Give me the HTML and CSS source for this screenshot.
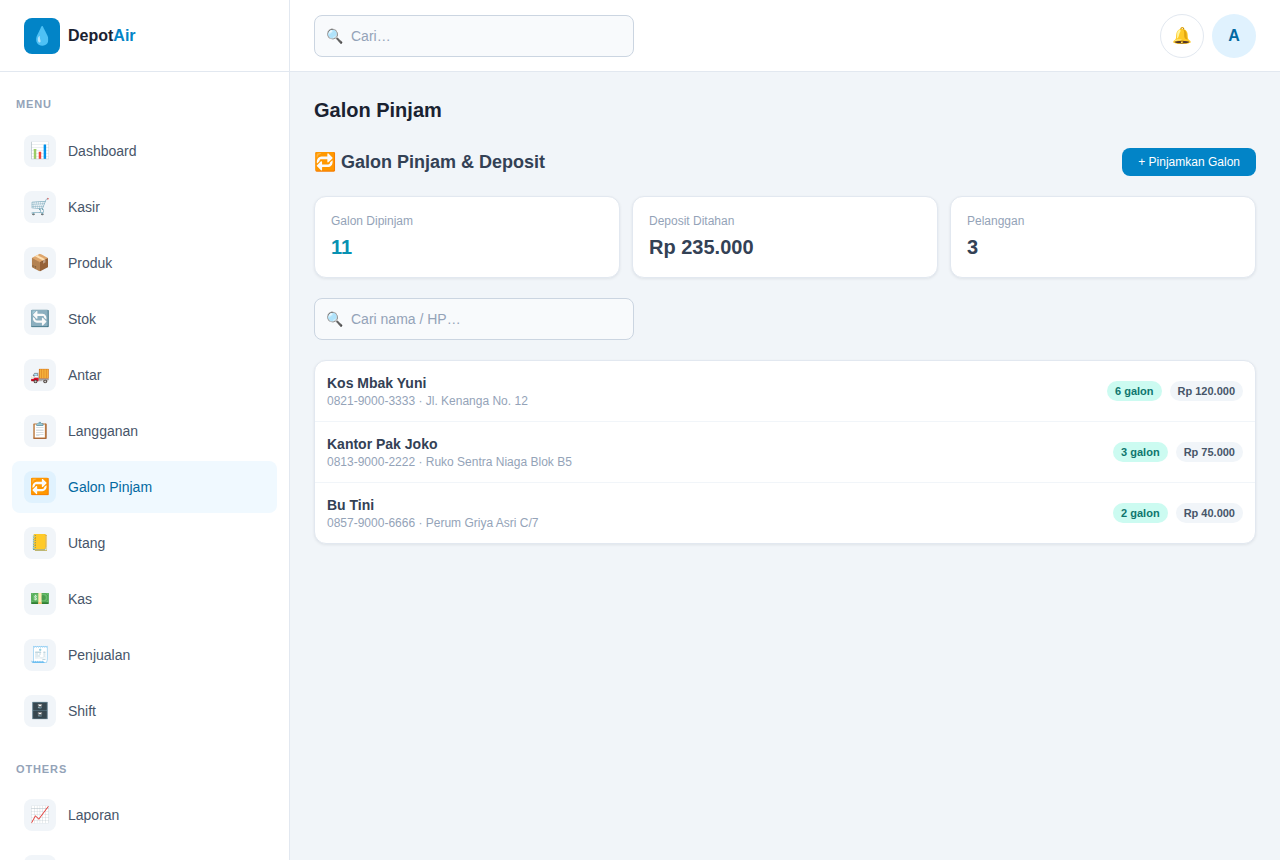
FILE: index.html
```html
<!DOCTYPE html>
<html lang="id">
<head>
<meta charset="utf-8">
<meta name="viewport" content="width=device-width, initial-scale=1">
<title>Galon Pinjam – DepotAir</title>
<link rel="stylesheet" href="styles.css">
</head>
<body>
<div class="app">
  <aside class="sidebar">
    <a class="brand" href="#"><span class="brand-logo" aria-hidden="true">💧</span><span>Depot<span class="brand-accent">Air</span></span></a>
    <nav class="nav">
      <section class="nav-section">
        <h2 class="nav-label">MENU</h2>
        <ul class="nav-list">
          <li><a class="nav-item" href="#"><span class="nav-icon">📊</span>Dashboard</a></li>
          <li><a class="nav-item" href="#"><span class="nav-icon">🛒</span>Kasir</a></li>
          <li><a class="nav-item" href="#"><span class="nav-icon">📦</span>Produk</a></li>
          <li><a class="nav-item" href="#"><span class="nav-icon">🔄</span>Stok</a></li>
          <li><a class="nav-item" href="#"><span class="nav-icon">🚚</span>Antar</a></li>
          <li><a class="nav-item" href="#"><span class="nav-icon">📋</span>Langganan</a></li>
          <li><a class="nav-item active" href="#" aria-current="page"><span class="nav-icon">🔁</span>Galon Pinjam</a></li>
          <li><a class="nav-item" href="#"><span class="nav-icon">📒</span>Utang</a></li>
          <li><a class="nav-item" href="#"><span class="nav-icon">💵</span>Kas</a></li>
          <li><a class="nav-item" href="#"><span class="nav-icon">🧾</span>Penjualan</a></li>
          <li><a class="nav-item" href="#"><span class="nav-icon">🗄️</span>Shift</a></li>
        </ul>
      </section>
      <section class="nav-section">
        <h2 class="nav-label">OTHERS</h2>
        <ul class="nav-list">
          <li><a class="nav-item" href="#"><span class="nav-icon">📈</span>Laporan</a></li>
          <li><a class="nav-item" href="#" aria-label="Pengaturan"><span class="nav-icon"></span></a></li>
        </ul>
      </section>
    </nav>
  </aside>

  <div class="main">
    <header class="topbar">
      <label class="search"><span class="search-icon" aria-hidden="true">🔍</span><input class="search-input" type="search" placeholder="Cari…" aria-label="Cari"></label>
      <div class="actions">
        <button class="round bell" type="button" aria-label="Notifikasi">🔔</button>
        <button class="round avatar" type="button">A</button>
      </div>
    </header>

    <main class="content">
      <h1 class="page-title">Galon Pinjam</h1>
      <div class="panel">
        <div class="section-head">
          <h2 class="section-title">🔁 Galon Pinjam &amp; Deposit</h2>
          <button class="btn" type="button">+ Pinjamkan Galon</button>
        </div>
        <div class="stats">
          <div class="card stat"><div class="stat-label">Galon Dipinjam</div><div class="stat-value teal">11</div></div>
          <div class="card stat"><div class="stat-label">Deposit Ditahan</div><div class="stat-value">Rp 235.000</div></div>
          <div class="card stat"><div class="stat-label">Pelanggan</div><div class="stat-value">3</div></div>
        </div>
        <label class="search"><span class="search-icon" aria-hidden="true">🔍</span><input class="search-input" type="search" placeholder="Cari nama / HP…" aria-label="Cari nama atau HP"></label>
        <ul class="card list">
          <li class="row">
            <div class="person"><div class="name">Kos Mbak Yuni</div><div class="detail">0821-9000-3333 · Jl. Kenanga No. 12</div></div>
            <div class="badges"><span class="badge mint">6 galon</span><span class="badge">Rp 120.000</span></div>
          </li>
          <li class="row">
            <div class="person"><div class="name">Kantor Pak Joko</div><div class="detail">0813-9000-2222 · Ruko Sentra Niaga Blok B5</div></div>
            <div class="badges"><span class="badge mint">3 galon</span><span class="badge">Rp 75.000</span></div>
          </li>
          <li class="row">
            <div class="person"><div class="name">Bu Tini</div><div class="detail">0857-9000-6666 · Perum Griya Asri C/7</div></div>
            <div class="badges"><span class="badge mint">2 galon</span><span class="badge">Rp 40.000</span></div>
          </li>
        </ul>
      </div>
    </main>
  </div>
</div>
</body>
</html>
```
FILE: styles.css
```css
* { box-sizing: border-box; }
body, h1, h2, ul { margin: 0; padding: 0; }
ul { list-style: none; }
a { color: inherit; text-decoration: none; }
button, input { font: inherit; }
button { cursor: pointer; padding: 0; }

body {
  background: #f1f5f9;
  color: #1e293b;
  font-family: "Liberation Sans", Arial, sans-serif;
  font-size: 14px;
  line-height: 1.5;
}

.app { display: flex; height: 100vh; }

.sidebar {
  display: flex;
  flex-direction: column;
  flex: 0 0 290px;
  background: #fff;
  border-right: 1px solid #e2e8f0;
}
.brand {
  display: flex;
  align-items: center;
  gap: 8px;
  flex: 0 0 72px;
  padding: 0 24px;
  border-bottom: 1px solid #e2e8f0;
  color: #1a2231;
  font-size: 16px;
  font-weight: 700;
}
.brand-logo {
  display: grid;
  place-items: center;
  width: 36px;
  height: 36px;
  border-radius: 8px;
  background: #0284c7;
  font-size: 18px;
  font-weight: 400;
  line-height: 28px;
}
.brand-accent { color: #0284c7; }

.nav {
  display: flex;
  flex-direction: column;
  gap: 24px;
  flex: 1;
  min-height: 0;
  overflow-y: auto;
  padding: 24px 12px;
  scrollbar-width: none;
}
.nav-label {
  margin-bottom: 12px;
  padding: 0 4px;
  color: #94a3b8;
  font-size: 11px;
  font-weight: 700;
  letter-spacing: 0.08em;
}
.nav-list { display: flex; flex-direction: column; gap: 4px; }
.nav-item {
  display: flex;
  align-items: center;
  gap: 12px;
  padding: 10px 12px;
  border-radius: 8px;
  color: #475569;
  line-height: 20px;
}
.nav-icon {
  display: grid;
  place-items: center;
  width: 32px;
  height: 32px;
  border-radius: 8px;
  background: #f1f5f9;
  font-size: 16px;
  line-height: 24px;
}
.nav-item.active { background: #f0f9ff; color: #0369a1; }
.nav-item.active .nav-icon { background: #e0f2fe; }

.main { flex: 1; min-width: 0; overflow-y: auto; }
.topbar {
  display: flex;
  align-items: center;
  justify-content: space-between;
  gap: 24px;
  height: 72px;
  padding: 0 24px;
  background: #fff;
  border-bottom: 1px solid #e2e8f0;
}
.search {
  display: flex;
  align-items: center;
  gap: 8px;
  width: 100%;
  max-width: 320px;
  height: 42px;
  padding: 0 11px;
  border: 1px solid #cbd5e1;
  border-radius: 8px;
  background: #f8fafc;
  line-height: 20px;
}
.search-input {
  flex: 1;
  min-width: 0;
  padding: 0;
  border: 0;
  outline: 0;
  background: transparent;
  color: #1e293b;
  appearance: none;
}
.search-input::placeholder { color: #94a3b8; }
.actions { display: flex; gap: 8px; }
.round {
  width: 44px;
  height: 44px;
  border: 1px solid #e2e8f0;
  border-radius: 50%;
  background: #fff;
  font-size: 16px;
}
.avatar { border: 0; background: #e0f2fe; color: #0369a1; font-weight: 700; }

.content { display: flex; flex-direction: column; gap: 24px; padding: 24px; }
.page-title { color: #1a2231; font-size: 20px; line-height: 28px; }
.panel { display: flex; flex-direction: column; gap: 20px; }
.section-head { display: flex; align-items: center; justify-content: space-between; gap: 12px; }
.section-title { color: #334155; font-size: 18px; line-height: 28px; }
.btn {
  padding: 5px 16px;
  border: 0;
  border-radius: 8px;
  background: #0284c7;
  color: #fff;
  font-size: 12px;
}
.card {
  background: #fff;
  border: 1px solid #e2e8f0;
  border-radius: 12px;
  box-shadow: 0 1px 3px rgba(15, 23, 42, 0.08);
}
.stats { display: grid; grid-template-columns: repeat(3, 1fr); gap: 12px; }
.stat { display: flex; flex-direction: column; gap: 4px; padding: 16px; }
.stat-label { color: #94a3b8; font-size: 12px; line-height: 16px; }
.stat-value { color: #334155; font-size: 20px; font-weight: 700; line-height: 28px; }
.stat-value.teal { color: #0891b2; }

.row {
  display: flex;
  align-items: center;
  justify-content: space-between;
  gap: 12px;
  padding: 12px;
}
.row + .row { border-top: 1px solid #f1f5f9; }
.name { color: #334155; font-weight: 700; line-height: 20px; }
.detail { color: #94a3b8; font-size: 12px; line-height: 16px; }
.badges { display: flex; gap: 8px; }
.badge {
  padding: 2px 8px;
  border-radius: 10px;
  background: #f1f5f9;
  color: #475569;
  font-size: 11px;
  font-weight: 700;
  line-height: 16px;
  white-space: nowrap;
}
.badge.mint { background: #ccfbf1; color: #0f766e; }
```
